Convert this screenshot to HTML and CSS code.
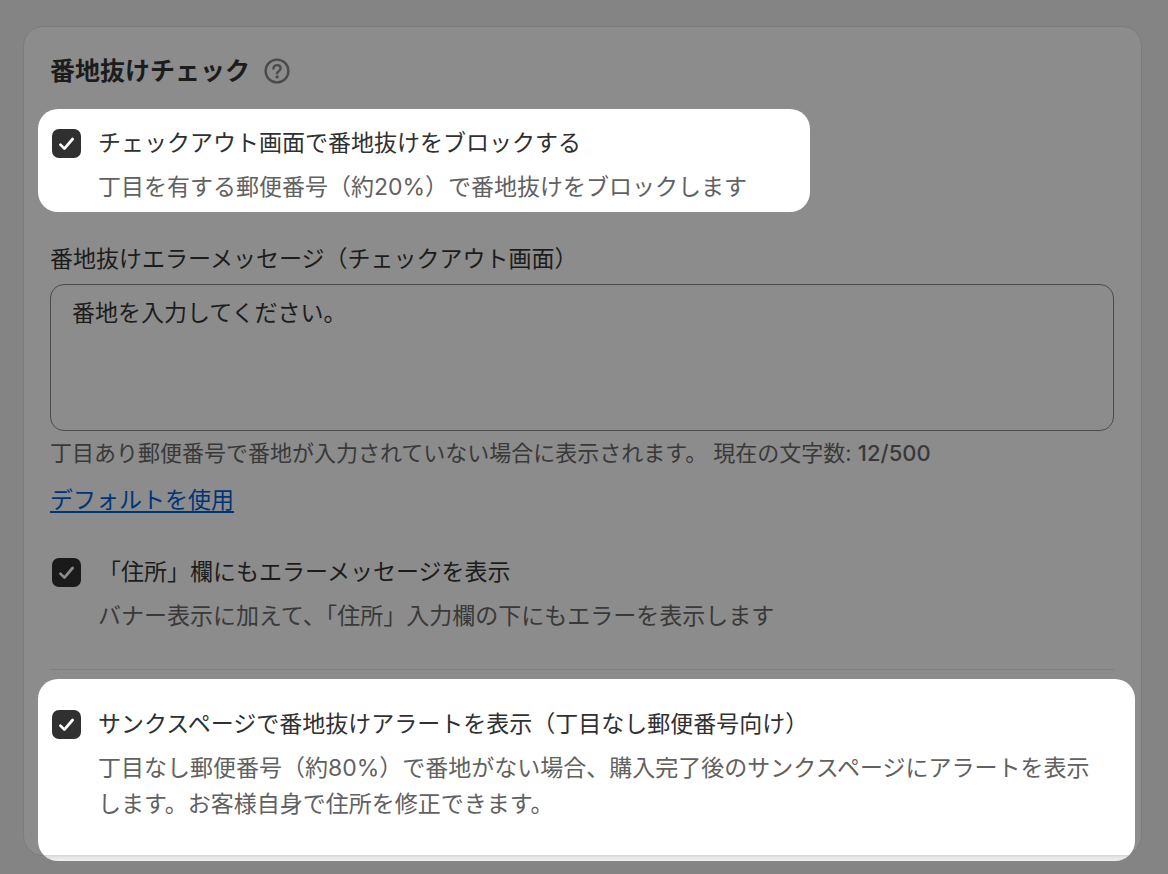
FILE: index.html
```html
<!DOCTYPE html>
<html lang="ja">
<head>
    <meta charset="UTF-8">
    <meta name="viewport" content="width=device-width, initial-scale=1.0">
    <link rel="stylesheet" href="styles.css">
    <title>番地抜けチェック</title>
</head>
<body>
    <main class="card">
        <div class="card-header">
            <h2>番地抜けチェック</h2>
            <button type="button" class="help-button" aria-label="ヘルプ">
                <svg viewBox="0 0 26 26" width="26" height="26" fill="none" stroke="currentColor" stroke-width="2.4" stroke-linecap="round">
                    <circle cx="13" cy="13" r="11.4"/>
                    <path d="M9.4 10.5c0-2 1.6-3.4 3.6-3.4s3.6 1.3 3.6 3.2c0 1.5-.9 2.2-1.9 2.9-.9.6-1.6 1.1-1.6 2.1"/>
                    <circle cx="13.1" cy="18.9" r="1.6" fill="currentColor" stroke="none"/>
                </svg>
            </button>
        </div>

        <div class="option spotlight block-option">
            <input type="checkbox" id="blockCheckout" checked>
            <div class="option-text">
                <label for="blockCheckout">チェックアウト画面で番地抜けをブロックする</label>
                <p>丁目を有する郵便番号（約20%）で番地抜けをブロックします</p>
            </div>
        </div>

        <div class="field">
            <label for="errorMessage">番地抜けエラーメッセージ（チェックアウト画面）</label>
            <textarea id="errorMessage" maxlength="500">番地を入力してください。</textarea>
            <p class="field-help">丁目あり郵便番号で番地が入力されていない場合に表示されます。 現在の文字数: <span class="count">12/500</span></p>
            <a href="#" class="default-link">デフォルトを使用</a>
        </div>

        <div class="option inline-option">
            <input type="checkbox" id="inlineError" checked>
            <div class="option-text">
                <label for="inlineError">「住所」欄にもエラーメッセージを表示</label>
                <p>バナー表示に加えて、「住所」入力欄の下にもエラーを表示します</p>
            </div>
        </div>

        <hr>

        <div class="option spotlight thanks-option">
            <input type="checkbox" id="thanksAlert" checked>
            <div class="option-text">
                <label for="thanksAlert">サンクスページで番地抜けアラートを表示（丁目なし郵便番号向け）</label>
                <p>丁目なし郵便番号（約80%）で番地がない場合、購入完了後のサンクスページにアラートを表示します。お客様自身で住所を修正できます。</p>
            </div>
        </div>
    </main>
</body>
</html>
```
FILE: styles.css
```css
*{
    box-sizing: border-box;
}
body{
    margin: 0;
    padding: 26px 26px 18px 23px;
    background-color: #848484;
    color: #1c1c1c;
    font-family: Inter, "Noto Sans CJK JP", sans-serif;
    font-size: 23px;
    line-height: 36px;
}
h2, p{
    margin: 0;
}
.card{
    padding: 26px 27px 0 26px;
    background-color: #8c8c8c;
    border: 1px solid #7c7c7c;
    border-radius: 20px;
}
.card-header{
    display: flex;
    align-items: center;
    gap: 14px;
}
.card-header h2{
    font-size: 25px;
    line-height: 36px;
    font-weight: 700;
}
.help-button{
    display: flex;
    padding: 0;
    border: none;
    background: none;
    color: #4b4b4b;
    cursor: pointer;
}

/* checkbox rows */
.option{
    display: flex;
    align-items: flex-start;
    gap: 17px;
    margin-left: -12px;
    padding-left: 14px;
}
.option-text{
    display: flex;
    flex-direction: column;
    gap: 8px;
}
.option-text p{
    color: #393939;
}
.option input{
    appearance: none;
    flex: none;
    width: 29px;
    height: 29px;
    margin: 4px 0 0;
    border-radius: 7px;
    background: #1a1a1a url("data:image/svg+xml,%3Csvg xmlns='http://www.w3.org/2000/svg' viewBox='0 0 29 29' fill='none' stroke='%238c8c8c' stroke-width='2.7' stroke-linecap='round' stroke-linejoin='round'%3E%3Cpath d='M8.4 15.6l4 4 8.2-9.6'/%3E%3C/svg%3E");
}

/* bright rows on the dimmed page */
.spotlight{
    background-color: #fff;
    border-radius: 20px;
    color: #303030;
}
.spotlight p{
    color: #616161;
}
.spotlight input{
    background: #303030 url("data:image/svg+xml,%3Csvg xmlns='http://www.w3.org/2000/svg' viewBox='0 0 29 29' fill='none' stroke='%23fff' stroke-width='2.7' stroke-linecap='round' stroke-linejoin='round'%3E%3Cpath d='M8.4 15.6l4 4 8.2-9.6'/%3E%3C/svg%3E");
}
.block-option{
    width: fit-content;
    margin-top: 20px;
    padding: 16px 63px 7px 14px;
}
.inline-option{
    margin-top: 36px;
}
.thanks-option{
    margin-top: 9px;
    margin-right: -21px;
    margin-bottom: -6px;
    padding: 27px 28px 39px 14px;
    background-image: linear-gradient(#d4d4d4, #e4e4e4 2px, #f1f1f1);
    background-size: 100% 6px;
    background-position: bottom;
    background-repeat: no-repeat;
}

.field{
    display: flex;
    flex-direction: column;
    align-items: flex-start;
    margin-top: 29px;
}
.field textarea{
    width: 100%;
    height: 147px;
    margin-top: 7px;
    padding: 10px 21px;
    border: 1px solid #4b4b4b;
    border-radius: 14px;
    background: transparent;
    color: #1c1c1c;
    font: inherit;
    resize: none;
}
.field-help{
    margin-top: 4px;
    color: #393939;
    font-size: 22px;
}
.count{
    font-weight: 500;
}
.default-link{
    margin-top: 11px;
    color: #003478;
    text-decoration-thickness: 2px;
    text-underline-offset: 3px;
}
hr{
    width: 100%;
    margin: 35px 0 0;
    border: none;
    border-top: 1px solid #7f7f7f;
}
```
